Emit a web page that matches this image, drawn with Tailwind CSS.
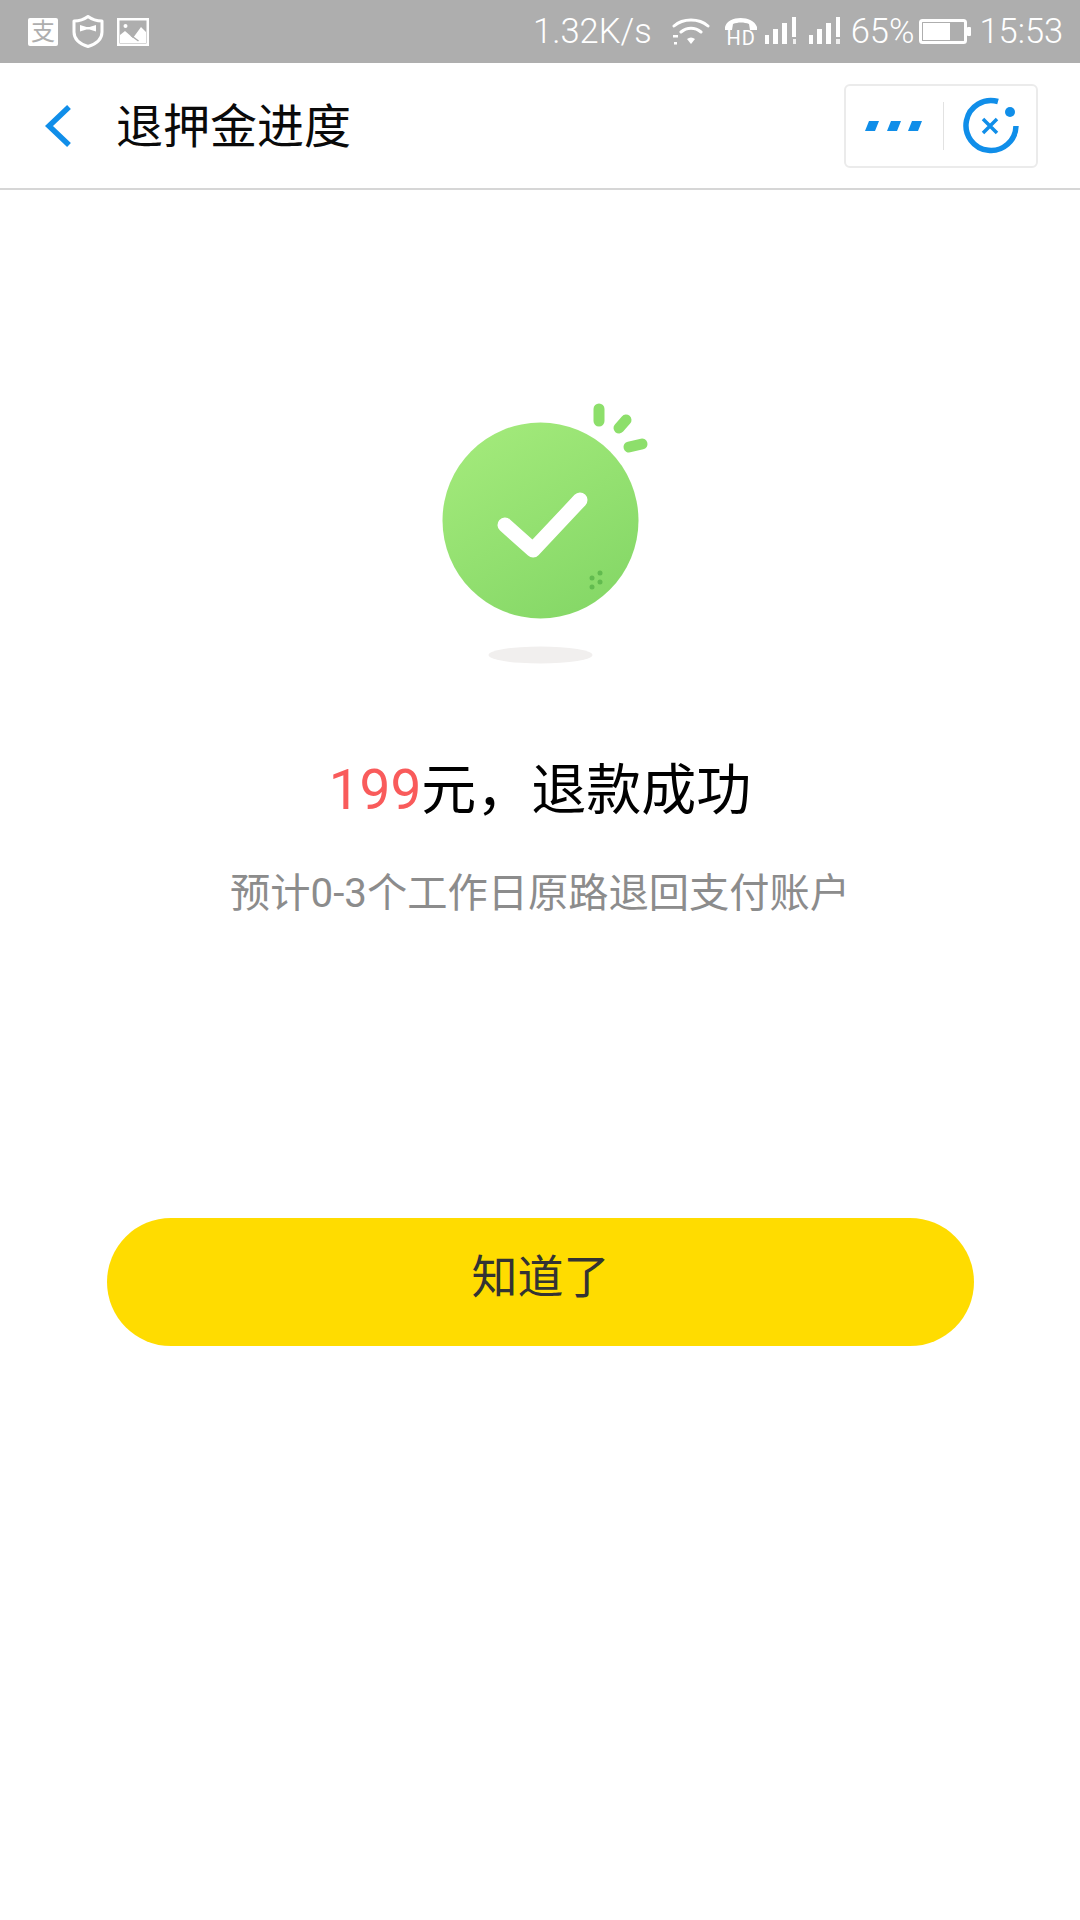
<!DOCTYPE html>
<html lang="zh-CN">
<head>
  <meta charset="UTF-8" />
  <meta name="viewport" content="width=device-width, initial-scale=1.0" />
  <title>退押金进度</title>
  <script src="https://cdn.jsdelivr.net/npm/@tailwindcss/browser@4"></script>
</head>
<body class="w-[1080px] h-[1920px] bg-white overflow-hidden font-['Roboto','Noto_Sans_CJK_SC',sans-serif]">

  <!-- Status bar -->
  <div class="h-[63px] bg-[#aeaeae] flex items-center text-white text-[34.5px] font-light leading-none">
    <div class="w-[30px] h-[28px] ml-[28px] bg-white rounded-[2px] flex items-center justify-center text-[#aeaeae] text-[24px] font-normal">支</div>
    <svg class="w-[32px] h-[33px] ml-[14px]" viewBox="0 0 32 33">
      <path d="M16 1.500 C20 4.500 25 6 30 6 V17 C30 24 24 29 16 31.500 C8 29 2 24 2 17 V6 C7 6 12 4.500 16 1.500 Z" fill="none" stroke="#fff" stroke-width="3" stroke-linejoin="round"/>
      <path d="M8 10 L14.500 12 H17.500 L24 10 V16.500 L17.500 14.500 H14.500 L8 16.500 Z" fill="#fff"/>
    </svg>
    <svg class="w-[32px] h-[28px] ml-[13px]" viewBox="0 0 32 28">
      <rect width="32" height="28" fill="#fff"/>
      <rect x="2.500" y="2.500" width="27" height="23" fill="#aeaeae"/>
      <circle cx="8.500" cy="8" r="2" fill="#fff"/>
      <path d="M3 25 L3 17 L8 13 L16 20 L24 9 L29 14 L29 25 Z" fill="#fff"/>
      <path d="M14 17.500 L21.500 23" stroke="#aeaeae" stroke-width="1.500"/>
    </svg>
    <span class="ml-[384px]">1.32K/s</span>
    <svg class="w-[38px] h-[28px] ml-[20px]" viewBox="0 0 38 28">
      <path d="M2 8 C11 0 27 0 36 8 M9 14 C15 9 23 9 29 14" fill="none" stroke="#fff" stroke-width="3" stroke-linecap="round"/>
      <path d="M15 21 C17.500 19 20.500 19 23 21 L19 26 Z" fill="#fff"/>
      <rect x="1" y="17" width="5" height="2.500" fill="#fff"/>
      <rect x="2" y="24" width="3" height="2.500" fill="#fff"/>
    </svg>
    <div class="w-[33px] ml-[15px] flex flex-col items-center">
      <svg class="w-[33px] h-[13px]" viewBox="0 0 33 13">
        <path d="M0 10 C3 -2 28 -2 32 10 L32 13 L25 13 L24 7 C19 5 13 5 8 7 L7 13 L0 13 Z" fill="#fff"/>
      </svg>
      <span class="mt-[1px] h-[15px] text-[20px] leading-[15px] font-normal tracking-[1px]">HD</span>
    </div>
    <svg class="w-[33px] h-[27px] ml-[6px] mb-[2px]" viewBox="0 0 33 27">
      <path d="M1 18 H5 V27 H1 Z M9 12 H14 V27 H9 Z M18 6 H23 V27 H18 Z M28 0 H32 V20 H28 Z" fill="#fff"/>
      <rect x="29" y="22" width="3" height="5" fill="#fff" fill-opacity="0.800"/>
    </svg>
    <svg class="w-[33px] h-[27px] ml-[11px] mb-[2px]" viewBox="0 0 33 27">
      <path d="M1 18 H5 V27 H1 Z M9 12 H14 V27 H9 Z M18 6 H23 V27 H18 Z M28 0 H32 V20 H28 Z" fill="#fff"/>
      <rect x="28" y="22" width="4" height="5" fill="#fff" fill-opacity="0.800"/>
    </svg>
    <span class="ml-[10px]">65%</span>
    <svg class="w-[52px] h-[25px] ml-[5px]" viewBox="0 0 52 25">
      <rect x="1.500" y="1.500" width="45" height="22" rx="2" fill="none" stroke="#fff" stroke-width="3"/>
      <rect x="4" y="4" width="27" height="17" fill="#fff"/>
      <rect x="48" y="8" width="4" height="9" rx="1" fill="#fff"/>
    </svg>
    <span class="ml-[8px]">15:53</span>
  </div>

  <!-- Header -->
  <div class="h-[127px] border-b-2 border-[#d6d6d6] flex items-center relative">
    <svg class="w-[28px] h-[42px] ml-[44px]" viewBox="0 0 28 42">
      <path d="M25 2 L5 21 L25 40" fill="none" stroke="#108ee9" stroke-width="5.500"/>
    </svg>
    <h1 class="ml-[44px] mt-[2px] text-[47px] leading-none text-[#0a0a0a]">退押金进度</h1>
    <div class="absolute left-[844px] top-[21px] w-[194px] h-[84px] border-2 border-[#ebebeb] rounded-[6px] flex items-center">
      <svg class="w-[58px] h-[12px] ml-[19px]" viewBox="0 0 58 12">
        <path d="M4 1 H14 L10 11 H0 Z M26 1 H36 L32 11 H22 Z M47 1 H57 L53 11 H43 Z" fill="#108ee9"/>
      </svg>
      <div class="w-px h-[48px] bg-[#e2e2e2] ml-[20px]"></div>
      <svg class="w-[58px] h-[58px] ml-[18px]" viewBox="0 0 58 58">
        <path d="M36 4.500 A25 25 0 1 0 54 29" fill="none" stroke="#108ee9" stroke-width="5.500"/>
        <circle cx="48" cy="15" r="5" fill="#108ee9"/>
        <path d="M21 22 L35 36 M35 22 L21 36" stroke="#108ee9" stroke-width="3.500"/>
      </svg>
    </div>
  </div>

  <!-- Result -->
  <main class="flex flex-col items-center">
    <svg class="w-[240px] h-[300px] mt-[190px]" viewBox="0 0 240 300">
      <defs>
        <linearGradient id="ball" x1="0.200" y1="0" x2="0.800" y2="1">
          <stop offset="0" stop-color="#a3ea7b"/>
          <stop offset="1" stop-color="#84d766"/>
        </linearGradient>
      </defs>
      <circle cx="120.500" cy="140.500" r="98" fill="url(#ball)"/>
      <path d="M85 145 L113 170 L160 120" fill="none" stroke="#fff" stroke-width="15" stroke-linecap="round" stroke-linejoin="round"/>
      <g stroke="#8ddf6b" stroke-width="11" stroke-linecap="round">
        <path d="M179 29 V41"/>
        <path d="M206 40 L199 48"/>
        <path d="M222 64 L209 67"/>
      </g>
      <g fill="#62bb4f">
        <circle cx="172" cy="198" r="2.500"/>
        <circle cx="180" cy="193" r="2.500"/>
        <circle cx="172" cy="207" r="2.500"/>
        <circle cx="180" cy="202" r="2.500"/>
      </g>
      <ellipse cx="120.500" cy="275" rx="52" ry="8.500" fill="#f1efee"/>
    </svg>

    <h2 class="mt-[75px] text-[55px] leading-[70px] text-black"><span class="text-[#f95b5b]">199</span>元，退款成功</h2>
    <p class="mt-[39px] text-[40.25px] leading-[60px] text-[#8c8c8c]">预计0-3个工作日原路退回支付账户</p>

    <button class="mt-[294px] ml-px pb-[10px] w-[867px] h-[128px] rounded-full bg-[#ffdc00] text-[46px] text-[#333333]">知道了</button>
  </main>

</body>
</html>
